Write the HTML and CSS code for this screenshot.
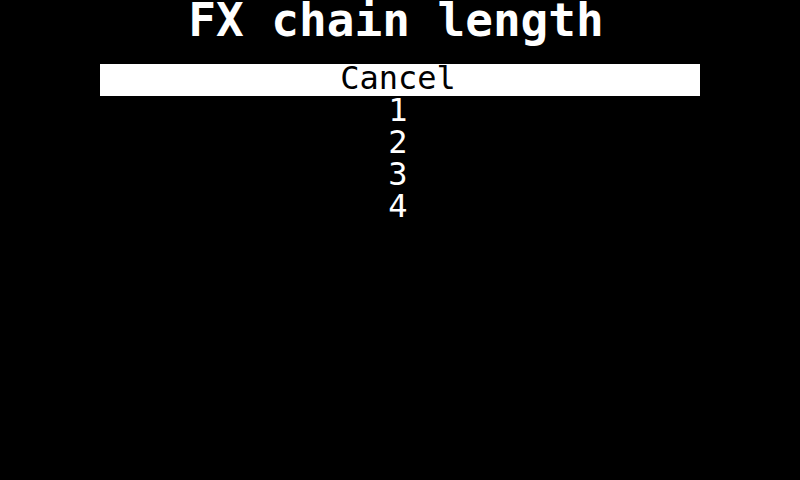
FILE: index.html
```html
<!DOCTYPE html>
<html>
<head>
<meta charset="utf-8">
<link rel="stylesheet" href="styles.css">
</head>
<body>
<div class="screen">
  <h1 class="title">FX chain length</h1>
  <ul class="menu">
    <li class="item selected">Cancel</li>
    <li class="item">1</li>
    <li class="item">2</li>
    <li class="item">3</li>
    <li class="item">4</li>
  </ul>
</div>
</body>
</html>
```
FILE: styles.css
```css
html, body {
  margin: 0;
  padding: 0;
  background: #000;
}
.screen {
  width: 800px;
  height: 480px;
  background: #000;
  color: #fff;
  font-family: "DejaVu Sans Mono", monospace;
  display: flex;
  flex-direction: column;
  align-items: center;
}
.title {
  margin: 0;
  box-sizing: border-box;
  width: 800px;
  height: 64px;
  padding-right: 8px;
  line-height: 40px;
  font-size: 46px;
  font-weight: bold;
  text-align: center;
}
.menu {
  list-style: none;
  margin: 0;
  padding: 0;
  width: 600px;
}
.item {
  box-sizing: border-box;
  height: 32px;
  padding-right: 4px;
  line-height: 28px;
  font-size: 32px;
  text-align: center;
}
.selected {
  background: #fff;
  color: #000;
}
```
